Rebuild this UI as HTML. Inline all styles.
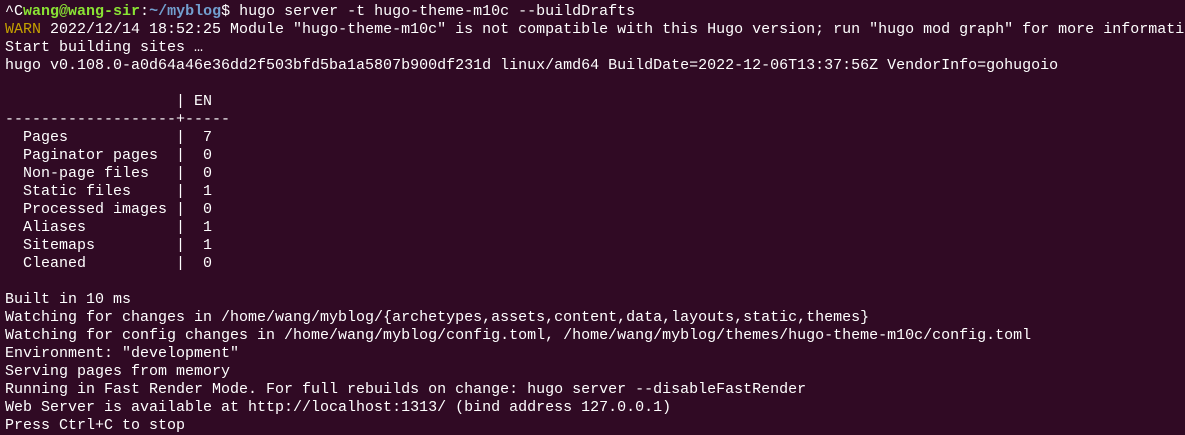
<!DOCTYPE html>
<html><head><meta charset="utf-8"><style>
html,body{margin:0;padding:0;background:#300a24;width:1185px;height:435px;overflow:hidden}
pre{margin:0;padding:3px 0 0 5px;font-family:"Liberation Mono","DejaVu Sans Mono",monospace;font-size:15px;line-height:18px;color:#ffffff;white-space:pre}
.g{color:#8ae234;font-weight:bold}.b{color:#729fcf;font-weight:bold}.y{color:#c4a000}
</style></head><body><pre>^C<span class="g">wang@wang-sir</span>:<span class="b">~/myblog</span>$ hugo server -t hugo-theme-m10c --buildDrafts
<span class="y">WARN</span> 2022/12/14 18:52:25 Module "hugo-theme-m10c" is not compatible with this Hugo version; run "hugo mod graph" for more informati
Start building sites …
hugo v0.108.0-a0d64a46e36dd2f503bfd5ba1a5807b900df231d linux/amd64 BuildDate=2022-12-06T13:37:56Z VendorInfo=gohugoio

                   | EN
-------------------+-----
  Pages            |  7
  Paginator pages  |  0
  Non-page files   |  0
  Static files     |  1
  Processed images |  0
  Aliases          |  1
  Sitemaps         |  1
  Cleaned          |  0

Built in 10 ms
Watching for changes in /home/wang/myblog/{archetypes,assets,content,data,layouts,static,themes}
Watching for config changes in /home/wang/myblog/config.toml, /home/wang/myblog/themes/hugo-theme-m10c/config.toml
Environment: "development"
Serving pages from memory
Running in Fast Render Mode. For full rebuilds on change: hugo server --disableFastRender
Web Server is available at http://localhost:1313/ (bind address 127.0.0.1)
Press Ctrl+C to stop</pre></body></html>
